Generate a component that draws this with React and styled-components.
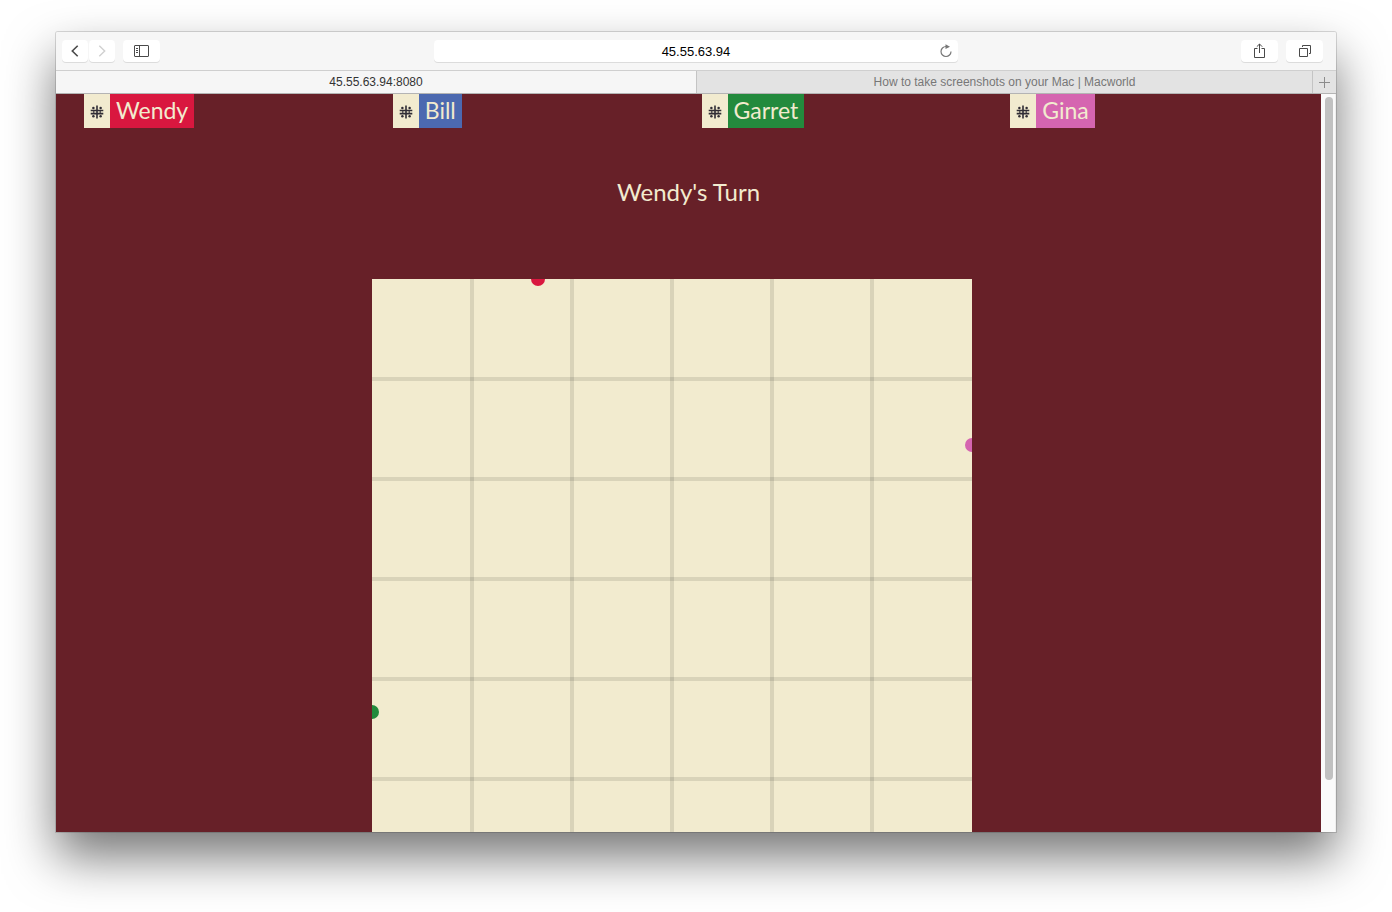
import React from "react";
import styled, { createGlobalStyle } from "styled-components";

const GlobalStyle = createGlobalStyle`
  *, *::before, *::after { box-sizing: border-box; }
  body { margin: 0; background: #fff; }
  button, input { font: inherit; }
`;

const display = `Lato, "Liberation Sans", sans-serif`;
const system = `"Liberation Sans", Arial, sans-serif`;

const Desktop = styled.div`
  height: 100vh;
  padding: 32px 56px 80px;
  font-family: ${system};
`;

const Window = styled.div`
  height: 100%;
  display: flex;
  flex-direction: column;
  border-radius: 2px 2px 0 0;
  box-shadow: 0 0 0 1px rgba(0, 0, 0, 0.14), 0 25px 50px rgba(0, 0, 0, 0.54);
`;

const Toolbar = styled.header`
  flex: none;
  display: grid;
  grid-template-columns: 1fr 41% 1fr;
  align-items: center;
  height: 39px;
  background: #f6f6f6;
  border-bottom: 1px solid #cfcfcf;
  border-radius: 2px 2px 0 0;
`;

const ToolGroup = styled.div`
  display: flex;
  gap: 8px;
  padding: 0 13px 0 6px;
  justify-content: ${(p) => (p.$end ? "flex-end" : "flex-start")};
`;

const NavPair = styled.div`
  display: flex;
  gap: 1px;
`;

const ToolButton = styled.button`
  display: flex;
  align-items: center;
  justify-content: center;
  width: ${(p) => (p.$narrow ? 26 : 37)}px;
  height: 22px;
  padding: 0;
  border: 0;
  border-radius: 4px;
  background: #fff;
  box-shadow: 0 1px 0 #dcdcdc;
  color: #4a4a4a;
  &:disabled { color: #d0d0d0; }
`;

const AddressBar = styled.div`
  display: flex;
  align-items: center;
  height: 22px;
  padding: 0 5px 0 25px;
  border-radius: 4px;
  background: #fff;
  box-shadow: 0 1px 0 #dcdcdc;
`;

const AddressInput = styled.input`
  flex: 1;
  min-width: 0;
  padding: 0;
  border: 0;
  background: none;
  text-align: center;
  font-size: 13px;
  color: #000;
  outline: none;
`;

const ReloadButton = styled.button`
  display: flex;
  align-items: center;
  justify-content: center;
  width: 14px;
  height: 16px;
  margin-left: 6px;
  padding: 0;
  border: 0;
  background: none;
  color: #777;
`;

const TabBar = styled.nav`
  flex: none;
  display: flex;
  height: 23px;
  background: #e3e3e3;
  border-bottom: 1px solid #b4b4b4;
`;

const Tab = styled.button`
  flex: ${(p) => (p.$active ? "0 0 50%" : "1")};
  padding: 0;
  border: 0;
  background: ${(p) => (p.$active ? "#f6f6f6" : "#e3e3e3")};
  border-left: ${(p) => (p.$active ? "0" : "1px solid #c4c4c4")};
  color: ${(p) => (p.$active ? "#333" : "#777")};
  font-size: 12px;
  line-height: 22px;
`;

const NewTab = styled.button`
  display: flex;
  align-items: center;
  justify-content: center;
  width: 24px;
  padding: 0;
  border: 0;
  border-left: 1px solid #c4c4c4;
  background: none;
  color: #8c8c8c;
`;

const Viewport = styled.div`
  flex: 1;
  min-height: 0;
  display: flex;
`;

const Page = styled.main`
  flex: 1;
  overflow: hidden;
  background: #672028;
  color: #f2ebcf;
  font-family: ${display};
`;

const ScrollTrack = styled.div`
  width: 15px;
  padding: 3px 3px 1px 4px;
  background: #fafafa;
  border-right: 1px solid #eee;
`;

const ScrollThumb = styled.div`
  width: 8px;
  height: 93%;
  border-radius: 4px;
  background: #c1c1c1;
`;

const Players = styled.ul`
  display: grid;
  grid-template-columns: repeat(4, 1fr);
  margin: 0;
  padding: 0 2px 0 28px;
  list-style: none;
`;

const Player = styled.li`
  display: flex;
  height: 34px;
`;

const PlayerIcon = styled.span`
  display: flex;
  align-items: center;
  justify-content: center;
  width: 26px;
  padding-top: 2px;
  background: #f2ebcf;
  color: #302d35;
`;

const PlayerName = styled.span`
  padding: 0 6px;
  background: ${(p) => p.$color};
  font-size: 23px;
  line-height: 33px;
`;

const Turn = styled.h1`
  margin: 47px 0 71px;
  text-align: center;
  font-size: 24px;
  font-weight: 400;
  line-height: 33px;
`;

const Board = styled.div`
  position: relative;
  width: 600px;
  height: 600px;
  margin-left: 25%;
  overflow: hidden;
  background: #f2ebcf;
`;

const GridLines = styled.svg`
  display: block;
  stroke: rgba(0, 0, 0, 0.1);
  stroke-width: 4;
`;

const Token = styled.span`
  position: absolute;
  left: ${(p) => p.$x}px;
  top: ${(p) => p.$y}px;
  width: 14px;
  height: 14px;
  margin: -7px 0 0 -7px;
  border-radius: 50%;
  background: ${(p) => p.$color};
`;

const players = [
  { name: "Wendy", color: "#d9173f", x: 166, y: 0 },
  { name: "Bill", color: "#4c69b0", x: 366, y: 600 },
  { name: "Garret", color: "#238a3d", x: 0, y: 433 },
  { name: "Gina", color: "#d565b0", x: 600, y: 166 },
];

const gridStops = [100, 200, 300, 400, 500];

const Svg = ({ w, h, children, width = 1 }) => (
  <svg width={w} height={h} viewBox={`0 0 ${w} ${h}`} fill="none" stroke="currentColor" strokeWidth={width} aria-hidden="true">
    {children}
  </svg>
);

const TileGlyph = () => (
  <Svg w={14} h={14} width={1.6}>
    <path d="M7 .6v12.8M.7 5.5h12.6M.7 8.6h12.6" />
    <path d="M3.8 5v4M10.2 5v4" strokeWidth="1.1" />
    <g fill="currentColor" stroke="none">
      <circle cx="3.4" cy="2.9" r="1.25" />
      <circle cx="10.6" cy="2.9" r="1.25" />
      <circle cx="3.4" cy="11.2" r="1.25" />
      <circle cx="10.6" cy="11.2" r="1.25" />
    </g>
  </Svg>
);

export default function App() {
  return (
    <Desktop>
      <GlobalStyle />
      <Window>
        <Toolbar>
          <ToolGroup>
            <NavPair>
              <ToolButton $narrow aria-label="Back">
                <Svg w={8} h={12} width={1.6}><path d="M6.7 .7L1.3 6l5.4 5.3" /></Svg>
              </ToolButton>
              <ToolButton $narrow disabled aria-label="Forward">
                <Svg w={8} h={12} width={1.4}><path d="M1.3 .7L6.7 6l-5.4 5.3" /></Svg>
              </ToolButton>
            </NavPair>
            <ToolButton aria-label="Show sidebar">
              <Svg w={15} h={12}>
                <rect x=".5" y=".5" width="14" height="11" rx=".5" />
                <path d="M5.5 .5v11M2 3.5h2M2 5.5h2M2 7.5h2" />
              </Svg>
            </ToolButton>
          </ToolGroup>
          <AddressBar>
            <AddressInput aria-label="Address" defaultValue="45.55.63.94" />
            <ReloadButton aria-label="Reload">
              <Svg w={14} h={14} width={1.2}>
                <path d="M7 2.5A5 5 0 1 0 12 7.5" />
                <path d="M6.5 .2L11 2.7L6.5 5z" fill="currentColor" stroke="none" />
              </Svg>
            </ReloadButton>
          </AddressBar>
          <ToolGroup $end>
            <ToolButton aria-label="Share">
              <Svg w={11} h={16}>
                <path d="M3.5 5.5h-3v9h10v-9h-3M5.5 10V1M2.8 3.7L5.5 1l2.7 2.7" />
              </Svg>
            </ToolButton>
            <ToolButton aria-label="Show all tabs">
              <Svg w={12} h={12}>
                <path d="M.5 3.5h8v8h-8zM3.5 2v-1.5h8v8h-1.5" />
              </Svg>
            </ToolButton>
          </ToolGroup>
        </Toolbar>
        <TabBar>
          <Tab $active>45.55.63.94:8080</Tab>
          <Tab>How to take screenshots on your Mac | Macworld</Tab>
          <NewTab aria-label="New tab">
            <Svg w={11} h={11}><path d="M5.5 0v11M0 5.5h11" /></Svg>
          </NewTab>
        </TabBar>
        <Viewport>
          <Page>
            <Players>
              {players.map((p) => (
                <Player key={p.name}>
                  <PlayerIcon><TileGlyph /></PlayerIcon>
                  <PlayerName $color={p.color}>{p.name}</PlayerName>
                </Player>
              ))}
            </Players>
            <Turn>Wendy's Turn</Turn>
            <Board>
              <GridLines width="600" height="600" aria-hidden="true">
                {gridStops.map((s) => (
                  <React.Fragment key={s}>
                    <line x1={s} y1="0" x2={s} y2="600" />
                    <line x1="0" y1={s} x2="600" y2={s} />
                  </React.Fragment>
                ))}
              </GridLines>
              {players.map((p) => (
                <Token key={p.name} $color={p.color} $x={p.x} $y={p.y} />
              ))}
            </Board>
          </Page>
          <ScrollTrack><ScrollThumb /></ScrollTrack>
        </Viewport>
      </Window>
    </Desktop>
  );
}
